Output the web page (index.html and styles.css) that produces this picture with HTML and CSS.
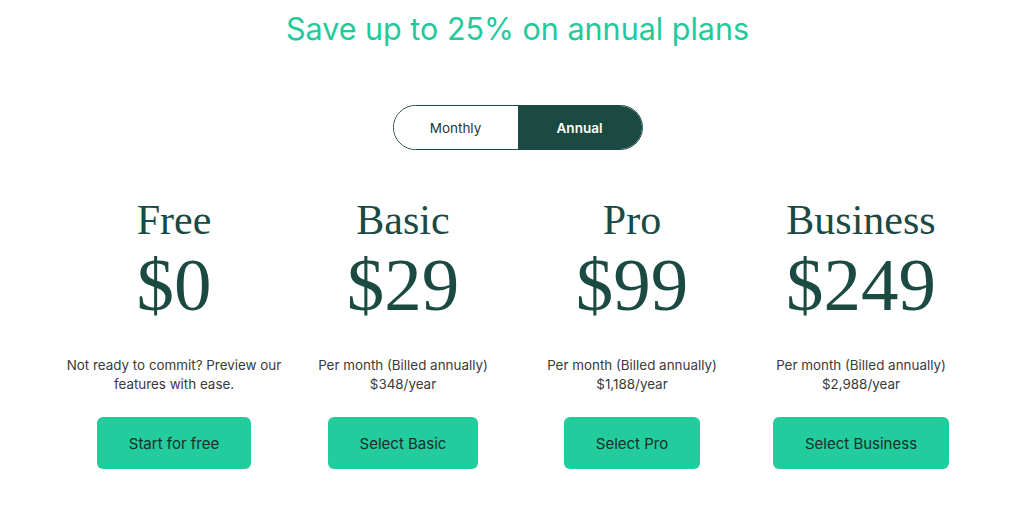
FILE: index.html
```html
<!DOCTYPE html>
<html>
<head>
<meta charset="utf-8">
<link rel="stylesheet" href="styles.css">
</head>
<body>
<main class="page">
  <h2 class="headline">Save up to 25% on annual plans</h2>
  <div class="toggle">
    <button class="toggle-btn">Monthly</button>
    <button class="toggle-btn active">Annual</button>
  </div>
  <section class="plans">
    <div class="plan">
      <h3 class="plan-name">Free</h3>
      <div class="price">$0</div>
      <p class="desc">Not ready to commit? Preview our<br>features with ease.</p>
      <a class="cta">Start for free</a>
    </div>
    <div class="plan">
      <h3 class="plan-name">Basic</h3>
      <div class="price">$29</div>
      <p class="desc">Per month (Billed annually)<br>$348/year</p>
      <a class="cta">Select Basic</a>
    </div>
    <div class="plan">
      <h3 class="plan-name">Pro</h3>
      <div class="price">$99</div>
      <p class="desc">Per month (Billed annually)<br>$1,188/year</p>
      <a class="cta">Select Pro</a>
    </div>
    <div class="plan">
      <h3 class="plan-name">Business</h3>
      <div class="price">$249</div>
      <p class="desc">Per month (Billed annually)<br>$2,988/year</p>
      <a class="cta">Select Business</a>
    </div>
  </section>
</main>
</body>
</html>
```
FILE: styles.css
```css
* { box-sizing: border-box; }
html, body { margin: 0; padding: 0; background: #fff; }
body { font-family: Inter, "Liberation Sans", Arial, sans-serif; color: #1b4a42; }
.page { display: flex; flex-direction: column; align-items: center; padding-left: 3px; }
.headline {
  margin: 11px 0 0;
  font-size: 30.5px;
  line-height: 36px;
  font-weight: 400;
  color: #22ca9b;
}
.toggle {
  margin-top: 58px;
  display: flex;
  width: 250px;
  height: 45px;
  border: 1px solid #1b4a42;
  border-radius: 23px;
  overflow: hidden;
}
.toggle-btn {
  flex: 1;
  border: 0;
  background: #fff;
  font-family: Inter, "Liberation Sans", Arial, sans-serif;
  font-size: 13.5px;
  color: #1b3a34;
  padding: 0;
}
.toggle-btn.active { background: #1b4a42; color: #fff; font-weight: 600; }
.plans {
  display: grid;
  grid-template-columns: repeat(4, 229px);
  margin-top: 47px;
}
.plan { display: flex; flex-direction: column; align-items: center; }
.plan-name {
  margin: 0;
  font-family: "Liberation Serif", "Times New Roman", serif;
  font-weight: 400;
  font-size: 42px;
  line-height: 46px;
  color: #1b4a42;
}
.price {
  margin-top: 2px;
  font-family: "Liberation Serif", "Times New Roman", serif;
  font-size: 75px;
  line-height: 80px;
  color: #1b4a42;
}
.desc {
  margin: 31px 0 0;
  text-align: center;
  font-size: 13.4px;
  line-height: 19px;
  color: #3a3a3a;
}
.cta {
  margin-top: 23px;
  display: flex;
  align-items: center;
  justify-content: center;
  height: 52px;
  padding: 0 32px;
  background: #22cc9c;
  border-radius: 6px;
  font-size: 15px;
  color: #1b2e2a;
}
```
